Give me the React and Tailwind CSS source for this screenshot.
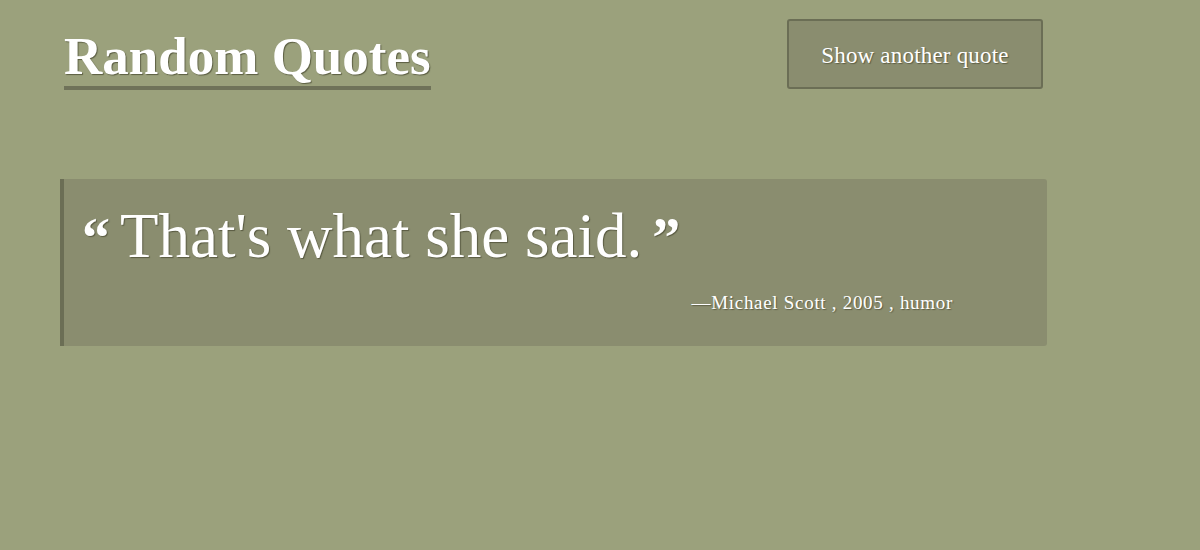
import React from 'react';

const quote = {
    text: "That's what she said.",
    author: 'Michael Scott',
    year: '2005',
    tag: 'humor',
};

const App = () => {
    return (
        <div className="min-h-[550px] w-full bg-[#9ba17c] text-white font-['Liberation_Serif',serif]">
            <div className="pl-[60px] pr-[153px] pt-[19px]">
                <header className="flex justify-between items-start pl-[4px] pr-[4px]">
                    <h1 className="mt-[7px] text-[53px] leading-[60px] font-bold border-b-[4px] border-[#6f7259] [text-shadow:1px_1px_1px_rgba(40,40,20,0.55)]">
                        Random Quotes
                    </h1>
                    <button className="w-[256px] h-[70px] pt-[4px] bg-[#8a8d6f] border-2 border-[#6b6e55] rounded-[3px] text-[23px] tracking-[0.2px] [text-shadow:1px_1px_1px_rgba(40,40,20,0.45)]">
                        Show another quote
                    </button>
                </header>

                <blockquote className="mt-[89px] bg-[#8a8d6f] border-l-[4px] border-[#6b6e55] rounded-r-[3px] pl-[18px] pr-[94px] pt-[19px] pb-[28px]">
                    <p className="text-[63px] leading-[76px] [text-shadow:1px_1px_1px_rgba(40,40,20,0.5)]">
                        <span className="font-bold text-[56px] mr-[10px]">“</span>
                        {quote.text}
                        <span className="font-bold text-[56px] ml-[10px]">”</span>
                    </p>
                    <p className="text-right text-[19px] mt-[13px] tracking-[0.7px] [text-shadow:1px_1px_1px_rgba(40,40,20,0.45)]">
                        —{quote.author} , {quote.year} , {quote.tag}
                    </p>
                </blockquote>
            </div>
        </div>
    );
};

export default App;
